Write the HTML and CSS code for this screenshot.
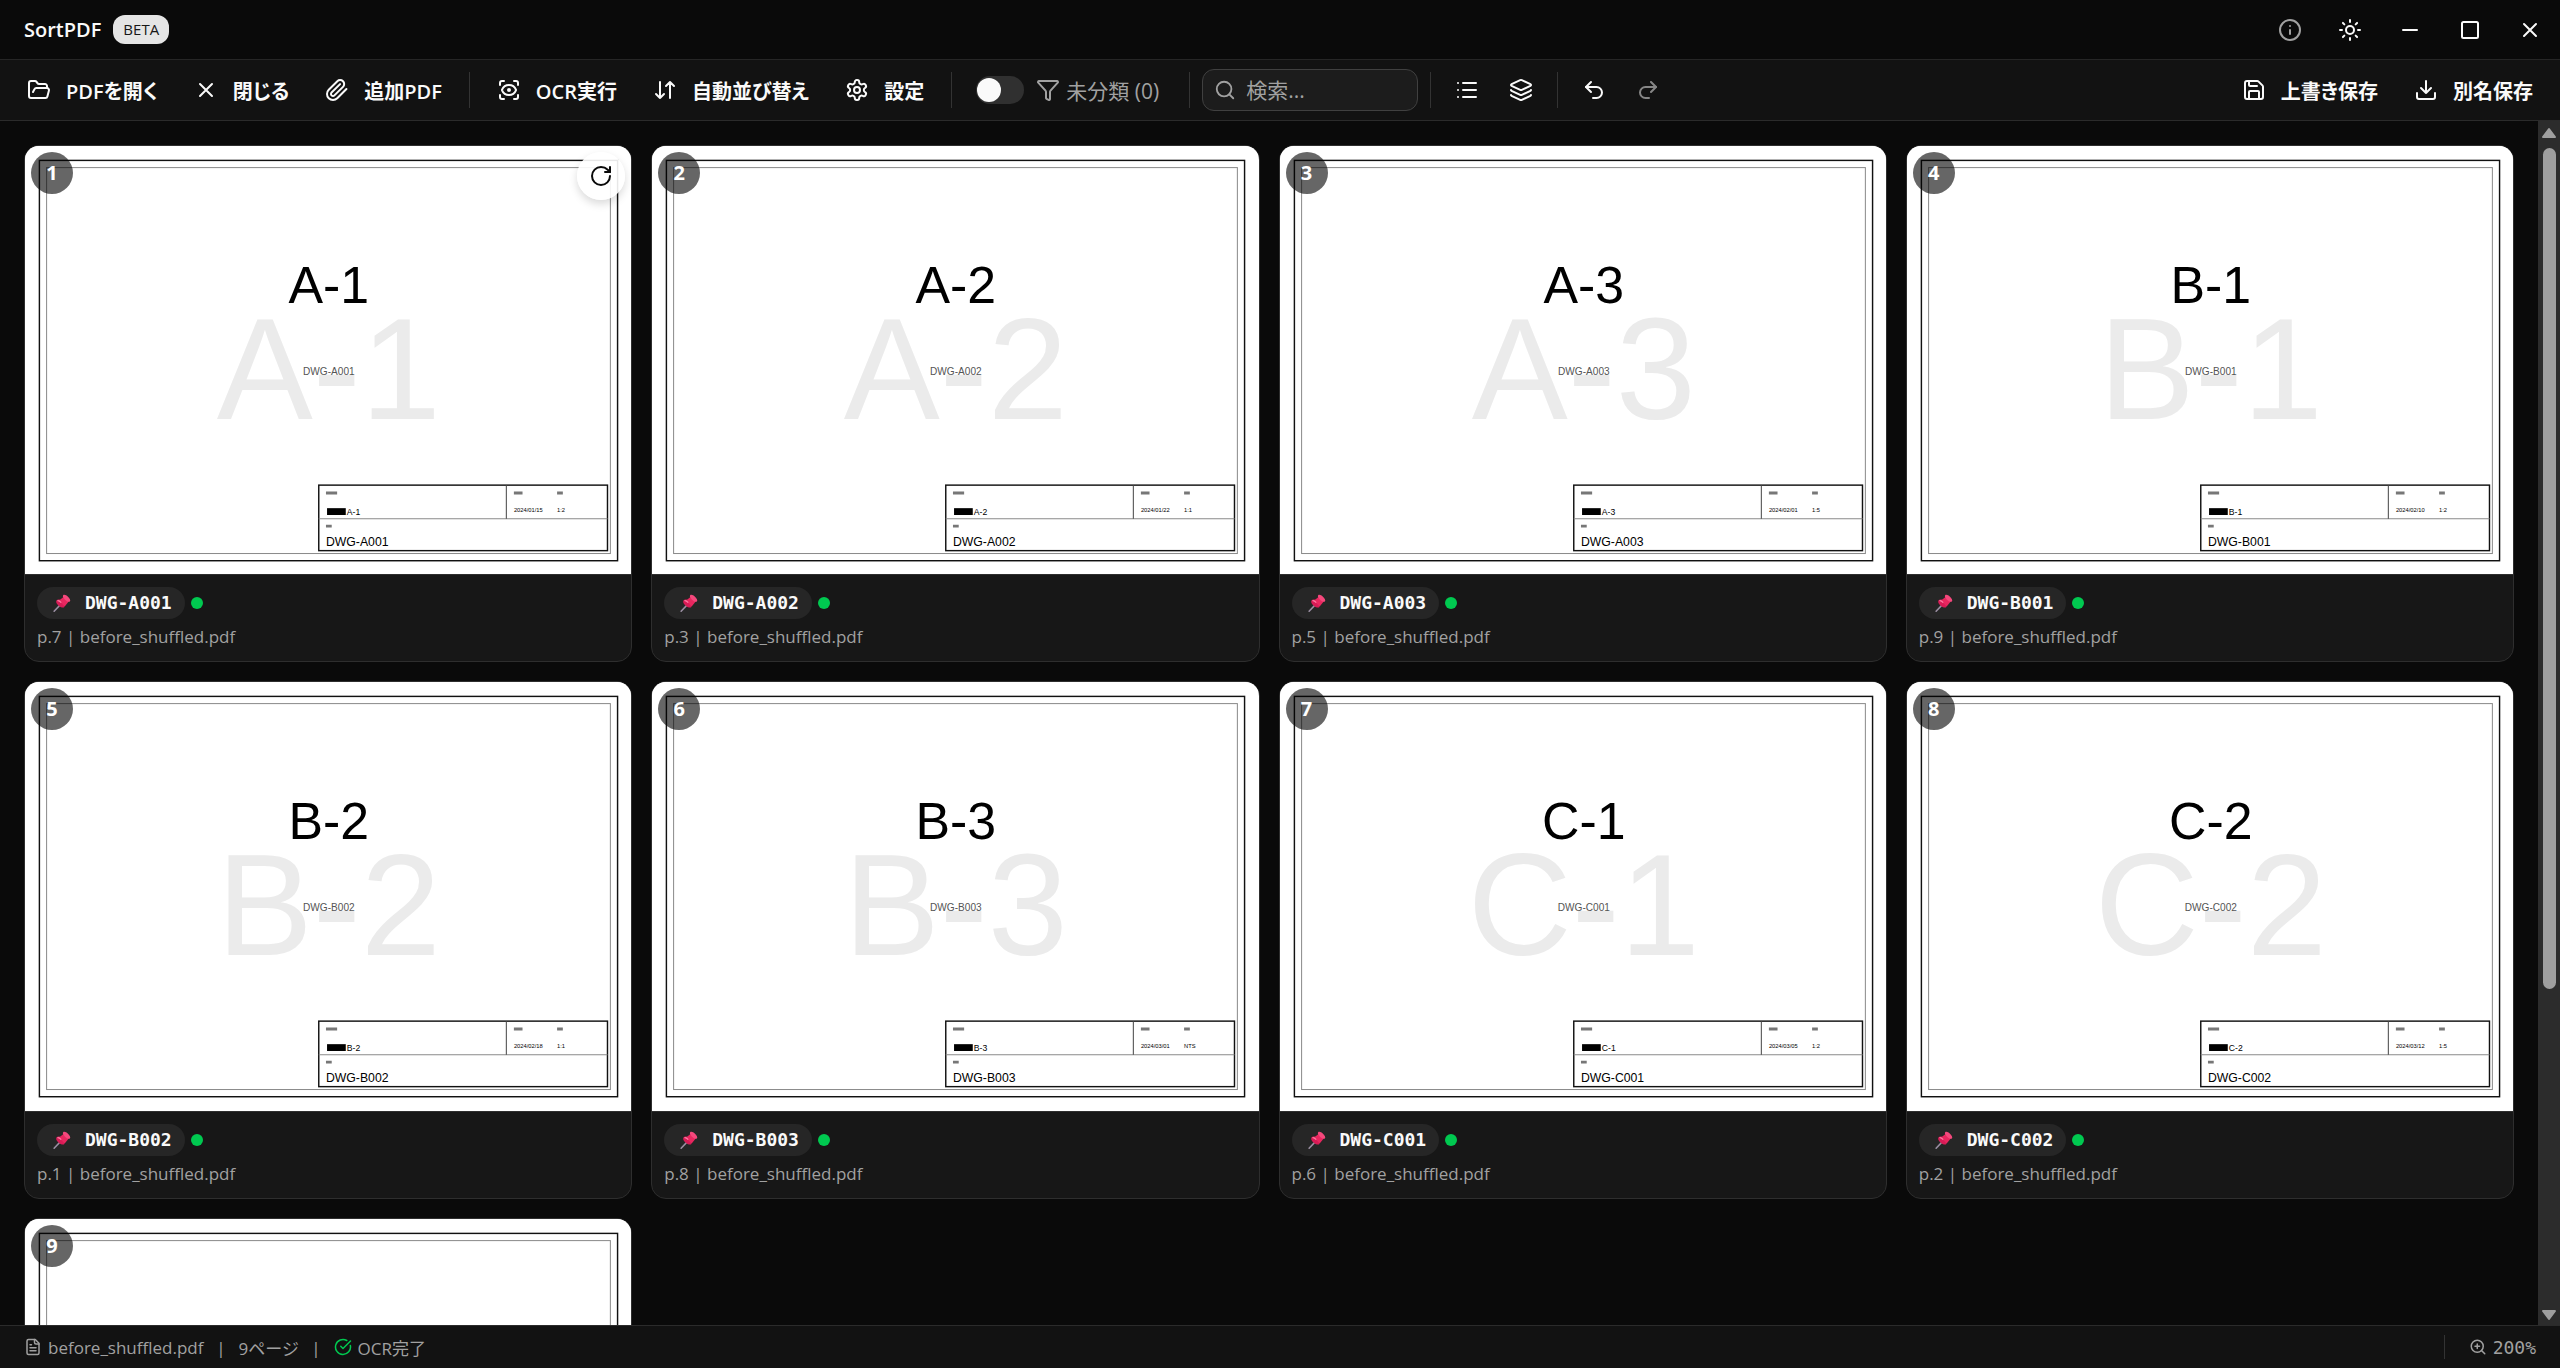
FILE: index.html
```
<!DOCTYPE html>
<html lang="ja">
    <head>
        <meta charset="utf-8">
        <meta name="viewport" content="width=device-width, initial-scale=1.0">
        <title>SortPDF</title>
        <link rel="stylesheet" href="styles.css">
    </head>
    <body>
        <!-- shared drawings -->
        <svg class="defs" aria-hidden="true">
            <symbol id="sheet" viewBox="0 0 842 595">
                <rect width="842" height="595" fill="#fff"/>
                <rect x="20" y="20" width="803" height="556" fill="none" stroke="#111" stroke-width="2"/>
                <rect x="30" y="30" width="783" height="536" fill="none" stroke="#8a8a8a" stroke-width="1.4"/>
                <rect x="408" y="471" width="401" height="91" fill="#fff" stroke="#111" stroke-width="2"/>
                <path d="M408 517.6H809" stroke="#8a8a8a" stroke-width="1.4"/>
                <path d="M668.5 471V517.6" stroke="#444" stroke-width="1.4"/>
                <path d="M418 482h15.500M679 482h12M739 482h8M418 528h8" stroke="#777" stroke-width="4"/>
                <rect x="419.500" y="503" width="26" height="9.500"/>
            </symbol>
            <symbol id="pin" viewBox="0 0 24 24">
                <path d="M10.500 13.500L1.500 23" stroke="#9b8fa3" stroke-width="2" stroke-linecap="round"/>
                <path d="M4.500 8.500c2-2 5-1.500 7.500 1s4.500 6 2.500 8.500c-2.500.500-5.500-1-7.500-3s-3.500-4.500-2.500-6.500z" fill="#d81b56"/>
                <path d="M8 8.500l6.500-5 6.500 6.500-5.500 6.500z" fill="#e8275f"/>
                <path d="M13.500 1.500c1.500-1.500 4.500 0 6.500 2s4 5 2.500 6.500c-2 1-4.500-.500-6.500-2.500s-3.500-4.500-2.500-6z" fill="#f4487c"/>
                <path d="M6 9c1.500-.500 3.500 1 5 2.500" stroke="#ff7fa6" stroke-width="1.500" fill="none"/>
            </symbol>
            <symbol id="rotate" viewBox="0 0 24 24"><path d="M21 12a9 9 0 1 1-9-9c2.520 0 4.930 1 6.740 2.740L21 8"/><path d="M21 3v5h-5"/></symbol>
            <symbol id="close" viewBox="0 0 24 24"><path d="M18 6 6 18M6 6l12 12"/></symbol>
        </svg>

        <header class="titlebar">
            <h1 class="app-name">SortPDF</h1>
            <span class="beta">BETA</span>
            <div class="window-buttons">
                <button type="button" class="win-btn muted" aria-label="情報"><svg class="icon" viewBox="0 0 24 24"><circle cx="12" cy="12" r="10"/><path d="M12 16v-4M12 8h.01"/></svg></button>
                <button type="button" class="win-btn" aria-label="テーマ"><svg class="icon" viewBox="0 0 24 24"><circle cx="12" cy="12" r="4"/><path d="M12 2v2M12 20v2M4.930 4.930l1.410 1.410M17.660 17.660l1.410 1.410M2 12h2M20 12h2M6.340 17.660l-1.410 1.410M19.070 4.930l-1.410 1.410"/></svg></button>
                <button type="button" class="win-btn" aria-label="最小化"><svg class="icon" viewBox="0 0 24 24"><path d="M5 12h14"/></svg></button>
                <button type="button" class="win-btn" aria-label="最大化"><svg class="icon" viewBox="0 0 24 24"><rect x="4" y="4" width="16" height="16" rx="1.500"/></svg></button>
                <button type="button" class="win-btn" aria-label="ウィンドウを閉じる"><svg class="icon"><use href="#close"/></svg></button>
            </div>
        </header>

        <nav class="toolbar">
            <button type="button" class="tool"><svg class="icon" viewBox="0 0 24 24"><path d="m6 14 1.500-2.900A2 2 0 0 1 9.240 10H20a2 2 0 0 1 1.940 2.500l-1.540 6a2 2 0 0 1-1.950 1.500H4a2 2 0 0 1-2-2V5a2 2 0 0 1 2-2h3.900a2 2 0 0 1 1.690.900l.810 1.200a2 2 0 0 0 1.670.900H18a2 2 0 0 1 2 2v2"/></svg>PDFを開く</button>
            <button type="button" class="tool"><svg class="icon"><use href="#close"/></svg>閉じる</button>
            <button type="button" class="tool"><svg class="icon" viewBox="0 0 24 24"><path d="m21.440 11.050-9.190 9.190a6 6 0 0 1-8.490-8.490l8.570-8.570A4 4 0 1 1 18 8.840l-8.590 8.570a2 2 0 0 1-2.830-2.830l8.490-8.480"/></svg>追加PDF</button>
            <span class="divider"></span>
            <button type="button" class="tool"><svg class="icon" viewBox="0 0 24 24"><path d="M3 7V5a2 2 0 0 1 2-2h2M17 3h2a2 2 0 0 1 2 2v2M21 17v2a2 2 0 0 1-2 2h-2M7 21H5a2 2 0 0 1-2-2v-2"/><circle cx="12" cy="12" r="1"/><path d="M18.940 12.330a1 1 0 0 0 0-.660 7.500 7.500 0 0 0-13.880 0 1 1 0 0 0 0 .660 7.500 7.500 0 0 0 13.880 0"/></svg>OCR実行</button>
            <button type="button" class="tool"><svg class="icon" viewBox="0 0 24 24"><path d="m3 16 4 4 4-4M7 20V4M21 8l-4-4-4 4M17 4v16"/></svg>自動並び替え</button>
            <button type="button" class="tool"><svg class="icon" viewBox="0 0 24 24"><path d="M12.220 2h-.440a2 2 0 0 0-2 2v.180a2 2 0 0 1-1 1.730l-.430.250a2 2 0 0 1-2 0l-.150-.080a2 2 0 0 0-2.730.730l-.220.380a2 2 0 0 0 .730 2.730l.150.100a2 2 0 0 1 1 1.720v.510a2 2 0 0 1-1 1.740l-.150.090a2 2 0 0 0-.730 2.730l.220.380a2 2 0 0 0 2.730.730l.150-.080a2 2 0 0 1 2 0l.430.250a2 2 0 0 1 1 1.730V20a2 2 0 0 0 2 2h.440a2 2 0 0 0 2-2v-.180a2 2 0 0 1 1-1.730l.430-.250a2 2 0 0 1 2 0l.150.080a2 2 0 0 0 2.730-.730l.220-.390a2 2 0 0 0-.730-2.730l-.150-.080a2 2 0 0 1-1-1.740v-.500a2 2 0 0 1 1-1.740l.150-.090a2 2 0 0 0 .730-2.730l-.220-.380a2 2 0 0 0-2.730-.730l-.150.080a2 2 0 0 1-2 0l-.430-.250a2 2 0 0 1-1-1.730V4a2 2 0 0 0-2-2z"/><circle cx="12" cy="12" r="3"/></svg>設定</button>
            <span class="divider"></span>
            <div class="filter">
                <input type="checkbox" id="unsorted" class="switch" role="switch">
                <label for="unsorted" class="filter-label"><svg class="icon" viewBox="0 0 24 24"><path d="M10 20a1 1 0 0 0 .550.900l2 1A1 1 0 0 0 14 21v-7a2 2 0 0 1 .520-1.340L21.740 4.670A1 1 0 0 0 21 3H3a1 1 0 0 0-.740 1.670l7.220 7.990A2 2 0 0 1 10 14z"/></svg>未分類 (0)</label>
            </div>
            <span class="divider"></span>
            <div class="search">
                <svg class="icon" viewBox="0 0 24 24"><circle cx="11" cy="11" r="8"/><path d="m21 21-4.300-4.300"/></svg>
                <input type="text" class="search-input" placeholder="検索..." aria-label="検索">
            </div>
            <span class="divider"></span>
            <button type="button" class="tool icon-only" aria-label="リスト"><svg class="icon" viewBox="0 0 24 24"><path d="M3 5h.01M3 12h.01M3 19h.01M8 5h13M8 12h13M8 19h13"/></svg></button>
            <button type="button" class="tool icon-only" aria-label="グループ"><svg class="icon" viewBox="0 0 24 24"><path d="M12.830 2.180a2 2 0 0 0-1.660 0L2.600 6.080a1 1 0 0 0 0 1.830l8.580 3.910a2 2 0 0 0 1.660 0l8.580-3.900a1 1 0 0 0 0-1.830z"/><path d="M2 12a1 1 0 0 0 .580.910l8.600 3.910a2 2 0 0 0 1.650 0l8.580-3.900A1 1 0 0 0 22 12"/><path d="M2 17a1 1 0 0 0 .580.910l8.600 3.910a2 2 0 0 0 1.650 0l8.580-3.900A1 1 0 0 0 22 17"/></svg></button>
            <span class="divider"></span>
            <button type="button" class="tool icon-only" aria-label="元に戻す"><svg class="icon" viewBox="0 0 24 24"><path d="M9 14 4 9l5-5"/><path d="M4 9h10.500a5.500 5.500 0 0 1 0 11H11"/></svg></button>
            <button type="button" class="tool icon-only" aria-label="やり直す" disabled><svg class="icon" viewBox="0 0 24 24"><path d="m15 14 5-5-5-5"/><path d="M20 9H9.500a5.500 5.500 0 0 0 0 11H13"/></svg></button>
            <div class="save-group">
                <button type="button" class="tool"><svg class="icon" viewBox="0 0 24 24"><path d="M15.200 3a2 2 0 0 1 1.400.600l3.800 3.800a2 2 0 0 1 .600 1.400V19a2 2 0 0 1-2 2H5a2 2 0 0 1-2-2V5a2 2 0 0 1 2-2z"/><path d="M17 21v-7a1 1 0 0 0-1-1H8a1 1 0 0 0-1 1v7M7 3v4a1 1 0 0 0 1 1h7"/></svg>上書き保存</button>
                <button type="button" class="tool"><svg class="icon" viewBox="0 0 24 24"><path d="M12 15V3M21 15v4a2 2 0 0 1-2 2H5a2 2 0 0 1-2-2v-4M7 10l5 5 5-5"/></svg>別名保存</button>
            </div>
        </nav>

        <div class="workspace">
            <main class="pages">
                <article class="card">
                    <div class="thumb">
                        <svg class="page" viewBox="0 0 842 595"><use href="#sheet"/><text class="mark" x="422" y="379">A-1</text><text class="head" x="422" y="218">A-1</text><text class="sub" x="422" y="318">DWG-A001</text><text class="name" x="447" y="512">A-1</text><text class="date" x="679" y="509">2024/01/15</text><text class="date" x="739" y="509">1:2</text><text class="code" x="418" y="556">DWG-A001</text></svg>
                        <span class="number">1</span>
                        <button type="button" class="rotate" aria-label="回転"><svg class="icon"><use href="#rotate"/></svg></button>
                    </div>
                    <div class="info">
                        <div class="tags"><span class="tag"><svg class="pin"><use href="#pin"/></svg>DWG-A001</span><span class="dot"></span></div>
                        <p class="source">p.7 | before_shuffled.pdf</p>
                    </div>
                </article>
                <article class="card">
                    <div class="thumb">
                        <svg class="page" viewBox="0 0 842 595"><use href="#sheet"/><text class="mark" x="422" y="379">A-2</text><text class="head" x="422" y="218">A-2</text><text class="sub" x="422" y="318">DWG-A002</text><text class="name" x="447" y="512">A-2</text><text class="date" x="679" y="509">2024/01/22</text><text class="date" x="739" y="509">1:1</text><text class="code" x="418" y="556">DWG-A002</text></svg>
                        <span class="number">2</span>
                    </div>
                    <div class="info">
                        <div class="tags"><span class="tag"><svg class="pin"><use href="#pin"/></svg>DWG-A002</span><span class="dot"></span></div>
                        <p class="source">p.3 | before_shuffled.pdf</p>
                    </div>
                </article>
                <article class="card">
                    <div class="thumb">
                        <svg class="page" viewBox="0 0 842 595"><use href="#sheet"/><text class="mark" x="422" y="379">A-3</text><text class="head" x="422" y="218">A-3</text><text class="sub" x="422" y="318">DWG-A003</text><text class="name" x="447" y="512">A-3</text><text class="date" x="679" y="509">2024/02/01</text><text class="date" x="739" y="509">1:5</text><text class="code" x="418" y="556">DWG-A003</text></svg>
                        <span class="number">3</span>
                    </div>
                    <div class="info">
                        <div class="tags"><span class="tag"><svg class="pin"><use href="#pin"/></svg>DWG-A003</span><span class="dot"></span></div>
                        <p class="source">p.5 | before_shuffled.pdf</p>
                    </div>
                </article>
                <article class="card">
                    <div class="thumb">
                        <svg class="page" viewBox="0 0 842 595"><use href="#sheet"/><text class="mark" x="422" y="379">B-1</text><text class="head" x="422" y="218">B-1</text><text class="sub" x="422" y="318">DWG-B001</text><text class="name" x="447" y="512">B-1</text><text class="date" x="679" y="509">2024/02/10</text><text class="date" x="739" y="509">1:2</text><text class="code" x="418" y="556">DWG-B001</text></svg>
                        <span class="number">4</span>
                    </div>
                    <div class="info">
                        <div class="tags"><span class="tag"><svg class="pin"><use href="#pin"/></svg>DWG-B001</span><span class="dot"></span></div>
                        <p class="source">p.9 | before_shuffled.pdf</p>
                    </div>
                </article>
                <article class="card">
                    <div class="thumb">
                        <svg class="page" viewBox="0 0 842 595"><use href="#sheet"/><text class="mark" x="422" y="379">B-2</text><text class="head" x="422" y="218">B-2</text><text class="sub" x="422" y="318">DWG-B002</text><text class="name" x="447" y="512">B-2</text><text class="date" x="679" y="509">2024/02/18</text><text class="date" x="739" y="509">1:1</text><text class="code" x="418" y="556">DWG-B002</text></svg>
                        <span class="number">5</span>
                    </div>
                    <div class="info">
                        <div class="tags"><span class="tag"><svg class="pin"><use href="#pin"/></svg>DWG-B002</span><span class="dot"></span></div>
                        <p class="source">p.1 | before_shuffled.pdf</p>
                    </div>
                </article>
                <article class="card">
                    <div class="thumb">
                        <svg class="page" viewBox="0 0 842 595"><use href="#sheet"/><text class="mark" x="422" y="379">B-3</text><text class="head" x="422" y="218">B-3</text><text class="sub" x="422" y="318">DWG-B003</text><text class="name" x="447" y="512">B-3</text><text class="date" x="679" y="509">2024/03/01</text><text class="date" x="739" y="509">NTS</text><text class="code" x="418" y="556">DWG-B003</text></svg>
                        <span class="number">6</span>
                    </div>
                    <div class="info">
                        <div class="tags"><span class="tag"><svg class="pin"><use href="#pin"/></svg>DWG-B003</span><span class="dot"></span></div>
                        <p class="source">p.8 | before_shuffled.pdf</p>
                    </div>
                </article>
                <article class="card">
                    <div class="thumb">
                        <svg class="page" viewBox="0 0 842 595"><use href="#sheet"/><text class="mark" x="422" y="379">C-1</text><text class="head" x="422" y="218">C-1</text><text class="sub" x="422" y="318">DWG-C001</text><text class="name" x="447" y="512">C-1</text><text class="date" x="679" y="509">2024/03/05</text><text class="date" x="739" y="509">1:2</text><text class="code" x="418" y="556">DWG-C001</text></svg>
                        <span class="number">7</span>
                    </div>
                    <div class="info">
                        <div class="tags"><span class="tag"><svg class="pin"><use href="#pin"/></svg>DWG-C001</span><span class="dot"></span></div>
                        <p class="source">p.6 | before_shuffled.pdf</p>
                    </div>
                </article>
                <article class="card">
                    <div class="thumb">
                        <svg class="page" viewBox="0 0 842 595"><use href="#sheet"/><text class="mark" x="422" y="379">C-2</text><text class="head" x="422" y="218">C-2</text><text class="sub" x="422" y="318">DWG-C002</text><text class="name" x="447" y="512">C-2</text><text class="date" x="679" y="509">2024/03/12</text><text class="date" x="739" y="509">1:5</text><text class="code" x="418" y="556">DWG-C002</text></svg>
                        <span class="number">8</span>
                    </div>
                    <div class="info">
                        <div class="tags"><span class="tag"><svg class="pin"><use href="#pin"/></svg>DWG-C002</span><span class="dot"></span></div>
                        <p class="source">p.2 | before_shuffled.pdf</p>
                    </div>
                </article>
                <article class="card">
                    <div class="thumb">
                        <svg class="page" viewBox="0 0 842 595"><use href="#sheet"/></svg>
                        <span class="number">9</span>
                    </div>
                </article>
            </main>
            <div class="scrollbar" aria-hidden="true">
                <svg class="arrow" viewBox="0 0 16 12"><path d="M8 2L14 10H2z"/></svg>
                <div class="track"><div class="thumb-bar"></div></div>
                <svg class="arrow" viewBox="0 0 16 12"><path d="M8 10L14 2H2z"/></svg>
            </div>
        </div>

        <footer class="statusbar">
            <span class="status"><svg class="icon small" viewBox="0 0 24 24"><path d="M15 2H6a2 2 0 0 0-2 2v16a2 2 0 0 0 2 2h12a2 2 0 0 0 2-2V7z"/><path d="M14 2v4a2 2 0 0 0 2 2h4M10 9H8M16 13H8M16 17H8"/></svg>before_shuffled.pdf</span>
            <span class="bar">|</span>
            <span class="status">9ページ</span>
            <span class="bar">|</span>
            <span class="status"><svg class="icon small done" viewBox="0 0 24 24"><path d="M21.800 10A10 10 0 1 1 17 3.340"/><path d="m9 11 3 3L22 4"/></svg>OCR完了</span>
            <span class="status zoom"><svg class="icon small" viewBox="0 0 24 24"><circle cx="11" cy="11" r="8"/><path d="m21 21-4.350-4.350M11 8v6M8 11h6"/></svg>200%</span>
        </footer>
    </body>
</html>
```
FILE: styles.css
```
*{
    margin: 0;
    padding: 0;
    box-sizing: border-box;
}
body{
    height: 100vh;
    display: flex;
    flex-direction: column;
    overflow: hidden;
    background-color: #0a0a0a;
    color: #fafafa;
    font-family: "Open Sans", "Noto Sans CJK JP", sans-serif;
    font-size: 20px;
    font-feature-settings: "palt"; /* proportional kana */
}
button, input{
    font: inherit;
    font-feature-settings: inherit;
    color: inherit;
    background: none;
    border: none;
}
.defs{
    display: none;
}
.icon{
    width: 24px;
    height: 24px;
    flex: none;
    fill: none;
    stroke: currentColor;
    stroke-width: 2;
    stroke-linecap: round;
    stroke-linejoin: round;
}
.icon.small{
    width: 18px;
    height: 18px;
}
/* title bar */
.titlebar{
    height: 60px;
    flex: none;
    display: flex;
    align-items: center;
    gap: 12px;
    padding-left: 24px;
    border-bottom: 1px solid #262626;
}
.app-name{
    font-size: 20px;
    font-weight: 600;
}
.beta{
    padding: 0 10px;
    border-radius: 12px;
    background-color: #e5e5e5;
    color: #171717;
    font-size: 15px;
    font-weight: 500;
    line-height: 29px;
}
.window-buttons{
    margin-left: auto;
    display: flex;
}
.win-btn{
    width: 60px;
    height: 59px;
    display: flex;
    align-items: center;
    justify-content: center;
}
.muted{
    color: #a1a1a1;
}
/* tool bar */
.toolbar{
    height: 61px;
    flex: none;
    display: flex;
    align-items: center;
    gap: 6px;
    padding: 0 12px;
    background-color: #121212;
    border-bottom: 1px solid #2b2b2b;
}
.tool{
    height: 42px;
    display: flex;
    align-items: center;
    gap: 15px;
    padding: 0 15px;
    font-weight: 600;
    white-space: nowrap;
}
.tool:disabled{
    opacity: .5;
}
.icon-only{
    padding: 0 12px;
}
.divider{
    width: 1px;
    height: 36px;
    margin: 0 6px;
    background-color: #333;
}
.filter{
    display: flex;
    align-items: center;
    gap: 12px;
    padding: 0 18px 0 12px;
    color: #a1a1a1;
    font-size: 21px;
}
.filter-label{
    display: flex;
    align-items: center;
    gap: 6px;
    white-space: nowrap;
}
.switch{
    appearance: none;
    width: 48px;
    height: 28px;
    padding: 2px 1px;
    border-radius: 14px;
    background-color: #303030;
}
.switch::before{
    content: "";
    display: block;
    width: 24px;
    height: 24px;
    border-radius: 50%;
    background-color: #fafafa;
}
.search{
    width: 216px;
    height: 42px;
    display: flex;
    align-items: center;
    gap: 10px;
    padding: 0 11px;
    border: 1px solid #404040;
    border-radius: 12px;
    background-color: #1c1c1c;
    color: #a1a1a1;
    font-size: 21px;
}
.search .icon{
    width: 22px;
    height: 22px;
}
.search-input{
    width: 100%;
    min-width: 0;
    outline: none;
}
.search-input::placeholder{
    color: #a1a1a1;
}
.save-group{
    margin-left: auto;
    display: flex;
    gap: 6px;
}
/* page grid */
.workspace{
    flex: 1;
    min-height: 0;
    display: flex;
}
.pages{
    flex: 1;
    display: grid;
    grid-template-columns: repeat(4, 1fr);
    grid-auto-rows: max-content;
    align-content: start;
    gap: 19px;
    padding: 24px;
    overflow: hidden;
}
.card{
    overflow: hidden;
    border: 1px solid #2e2e2e;
    border-radius: 15px;
    background-color: #171717;
}
.thumb{
    position: relative;
    background-color: #fff;
}
.page{
    display: block;
    width: 100%;
    font-family: "Liberation Sans", Arial, sans-serif;
}
.mark, .head, .sub{
    text-anchor: middle;
}
.mark{
    font-size: 200px;
    fill: #ebebeb;
}
.head{
    font-size: 72px;
}
.sub{
    font-size: 14px;
    fill: #555;
}
.name{
    font-size: 12px;
}
.date{
    font-size: 8px;
}
.code{
    font-size: 17px;
}
.number{
    position: absolute;
    top: 6px;
    left: 6px;
    width: 42px;
    height: 42px;
    border-radius: 50%;
    background-color: rgba(0, 0, 0, .6);
    color: #fff;
    font-weight: 700;
    line-height: 42px;
    text-align: center;
}
.rotate{
    position: absolute;
    top: 6px;
    right: 6px;
    width: 48px;
    height: 48px;
    display: flex;
    align-items: center;
    justify-content: center;
    border-radius: 50%;
    background-color: rgba(255, 255, 255, .9);
    box-shadow: 0 4px 8px rgba(0, 0, 0, .15);
    color: #0a0a0a;
}
.info{
    padding: 12px;
    border-top: 1px solid #2e2e2e;
}
.tags{
    display: flex;
    align-items: center;
    gap: 6px;
    margin-bottom: 6px;
}
.tag{
    display: flex;
    align-items: center;
    gap: 14px;
    padding: 0 13px 0 16px;
    border-radius: 16px;
    background-color: #262626;
    font-family: "DejaVu Sans Mono", monospace;
    font-size: 18px;
    font-weight: 700;
    line-height: 32px;
}
.pin{
    width: 18px;
    height: 18px;
}
.dot{
    width: 12px;
    height: 12px;
    border-radius: 50%;
    background-color: #00c950;
}
.source{
    color: #a1a1a1;
    font-size: 17px;
    line-height: 24px;
}
/* scroll bar */
.scrollbar{
    width: 22px;
    display: flex;
    flex-direction: column;
    align-items: center;
    padding: 6px 0 4px;
    background-color: #2c2c2c;
}
.arrow{
    width: 16px;
    height: 12px;
    fill: #9f9f9f;
    stroke: #9f9f9f;
    stroke-width: 2;
    stroke-linejoin: round;
}
.track{
    flex: 1;
    width: 13px;
    padding: 9px 0;
}
.thumb-bar{
    height: 73%;
    border-radius: 7px;
    background-color: #9f9f9f;
}
/* status bar */
.statusbar{
    height: 43px;
    flex: none;
    display: flex;
    align-items: center;
    gap: 16px;
    padding: 0 24px;
    background-color: #121212;
    border-top: 1px solid #2b2b2b;
    color: #a1a1a1;
    font-size: 17px;
}
.status{
    display: flex;
    align-items: center;
    gap: 6px;
}
.bar{
    width: 3px;
    display: flex;
    justify-content: center;
}
.done{
    color: #00c950;
}
.zoom{
    height: 24px;
    margin-left: auto;
    padding-left: 24px;
    border-left: 1px solid #333;
    font-family: "DejaVu Sans Mono", monospace;
    font-size: 18px;
}
```
